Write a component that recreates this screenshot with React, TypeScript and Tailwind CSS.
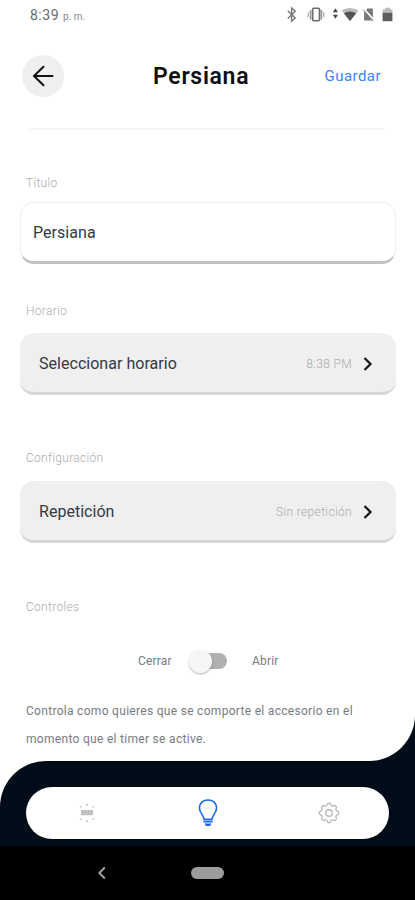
import React from 'react';
import { HiOutlineCog } from 'react-icons/hi';

interface OptionRowProps {
    label: string;
    value: string;
}

const StatusIcons: React.FC = () => (
    <svg className="h-[18px] w-[112px]" viewBox="283 6 112 18" fill="none">
        {/* Bluetooth */}
        <path d="M287.8 10.8 295.2 18l-3.6 3.2V8l3.6 3.2-7.4 7.2" stroke="#777" strokeWidth="1.4" />
        {/* Vibrate */}
        <path d="M308.2 12.3v5M323.8 12.3v5" stroke="#bbb" strokeWidth="1.5" />
        <path d="M310.6 10v9.4M321.4 10v9.4" stroke="#999" strokeWidth="1.7" />
        <rect x="312.7" y="8.2" width="6.8" height="12.6" rx="1" stroke="#6c6c6c" strokeWidth="1.6" />
        {/* Data arrows */}
        <path d="m335.4 8.2 2.5 4h-5zM335.4 18.8l2.5-4h-5z" fill="#444" />
        {/* Wifi */}
        <path d="M341.6 10.6Q350 5.4 358.4 10.6L350 21z" fill="#bbb" />
        <path d="M343.8 13.2Q350 9.8 356.2 13.2L350 21z" fill="#555" />
        {/* No sim */}
        <path d="M367.5 8.6h5.4v11.8h-8.8v-8.2z" fill="#777" />
        <path d="m363.6 9 11 12" stroke="#fff" strokeWidth="2.2" />
        <path d="m363.2 9.8 10.4 11.4" stroke="#777" strokeWidth="1" />
        {/* Battery */}
        <path d="M382.6 9.6h2.4V7.8h5v1.8h2.4V13h-9.8z" fill="#bbb" />
        <path d="M382.6 12.8h9.8v8.4h-9.8z" fill="#5c5c5c" />
    </svg>
);

const SectionLabel: React.FC<{ children: React.ReactNode }> = ({ children }) => (
    <p className="h-4 pl-[26px] text-[12px] leading-4 font-light tracking-[0.3px] text-[#adadad]">{children}</p>
);

const OptionRow: React.FC<OptionRowProps> = ({ label, value }) => (
    <button className="mx-5 flex h-[62px] w-[376px] items-center rounded-[14px] border-b-[3px] border-[#d6d6d6] bg-[#efefef] pt-[2px] pr-[23px] pl-[19px] text-left">
        <span className="flex-1 text-[16px] tracking-[0.03px] text-[#343945]">{label}</span>
        <span className="mr-[11px] text-[12px] font-light tracking-[0.35px] text-[#acacac]">{value}</span>
        <svg className="h-4 w-[10px]" viewBox="0 0 10 16" fill="none" stroke="#161616" strokeWidth="2.2">
            <path d="m1.5 2 6 6-6 6" />
        </svg>
    </button>
);

const BlindIcon: React.FC = () => (
    <svg className="h-5 w-5" viewBox="0 0 20 20" fill="#c0c0c0">
        <rect x="4" y="7" width="12" height="5.2" rx="0.6" />
        <circle cx="10" cy="1.7" r="1" />
        <circle cx="3.7" cy="3.8" r="0.9" />
        <circle cx="16.3" cy="3.8" r="0.9" />
        <circle cx="3.7" cy="16.2" r="0.9" />
        <circle cx="16.3" cy="16.2" r="0.9" />
        <circle cx="10" cy="18.2" r="1" />
    </svg>
);

const BulbIcon: React.FC = () => (
    <svg className="h-[30px] w-6" viewBox="0 0 24 30" fill="none" stroke="#1a68ee" strokeWidth="1.6">
        <path d="M8.1 21.4C7.4 16.6 3.4 15 3.4 9.8 3.4 5.2 7.1 2 12 2s8.6 3.2 8.6 7.8c0 5.2-4 6.800-4.700 11.600z" />
        <path d="M7.400 23.600h9.200" strokeWidth="1.8" />
        <path d="M8.400 25.600h7.200L13.800 28h-3.600z" fill="#1a68ee" stroke="none" />
    </svg>
);

const App: React.FC = () => {
    return (
        <div className="h-[900px] w-[415px] overflow-hidden bg-black font-['Roboto',sans-serif]">
            <div className="bg-[#000c18]">
                <main className="h-[761px] rounded-br-[46px] bg-white">
                    {/* Status bar */}
                    <div className="flex h-[30px] items-center justify-between pr-5 pl-[30px]">
                        <div className="flex items-baseline gap-1 text-[#6a6a6a]">
                            <span className="text-[14px] tracking-[0.5px]">8:39</span>
                            <span className="text-[10px] text-[#888]">p. m.</span>
                        </div>
                        <StatusIcons />
                    </div>

                    <header className="mt-[25px] flex h-[42px] items-center pr-[34px] pl-[22px]">
                        <button
                            className="flex h-[42px] w-[42px] items-center justify-center rounded-full bg-[#efefef]"
                            aria-label="Volver"
                        >
                            <svg className="h-6 w-6" viewBox="0 0 24 24" fill="none" stroke="#111" strokeWidth="2" strokeLinecap="round">
                                <path d="M21.500 12H3M12.500 2.800 3 12l9.500 9.200" />
                            </svg>
                        </button>
                        <h1 className="ml-[89px] flex-1 pt-[3px] text-[23px] font-semibold tracking-[0.7px] text-[#0c0d14]">Persiana</h1>
                        <button className="pt-px text-[15px] tracking-[0.45px] text-[#3c83f7]">Guardar</button>
                    </header>

                    <div className="mx-[30px] mt-[31px] h-[2px] bg-[#f5f5f5]" />

                    <div className="mt-[45px]">
                        <SectionLabel>Título</SectionLabel>
                    </div>
                    <div className="mx-5 mt-[11px] flex h-[62px] w-[376px] items-center rounded-[14px] border border-b-[3px] border-[#efefef] border-b-[#c3c3c3] pt-px pl-3 text-[16px] tracking-[0.05px] text-[#343945]">
                        Persiana
                    </div>

                    <div className="mt-[39px] mb-[14px]">
                        <SectionLabel>Horario</SectionLabel>
                    </div>
                    <OptionRow label="Seleccionar horario" value="8:38 PM" />

                    <div className="mt-[55px] mb-[15px]">
                        <SectionLabel>Configuración</SectionLabel>
                    </div>
                    <OptionRow label="Repetición" value="Sin repetición" />

                    <div className="mt-[56px]">
                        <SectionLabel>Controles</SectionLabel>
                    </div>

                    <div className="mt-[34px] flex h-6 items-center pl-[138px] text-[12px] tracking-[0.2px] text-[#777b84]">
                        <span className="w-[51px]">Cerrar</span>
                        <button className="flex h-6 w-[63px] items-center" role="switch" aria-checked="false" aria-label="Cerrar o abrir">
                            <span className="z-10 h-[23px] w-[23px] rounded-full bg-[#f6f6f6] shadow-[0_1px_2px_rgba(0,0,0,0.3)]" />
                            <span className="-ml-[18px] h-4 w-[33px] rounded-full bg-[#b0b0b0]" />
                        </button>
                        <span>Abrir</span>
                    </div>

                    <p className="mt-[24px] ml-[26px] w-[350px] text-[12px] leading-7 tracking-[0.3px] text-[#777b82]">
                        Controla como quieres que se comporte el accesorio en el
                        <br />
                        momento que el timer se active.
                    </p>
                </main>
            </div>

            <div className="bg-white">
                <div className="h-[85px] rounded-tl-[46px] bg-[#000c18] pt-[26px]">
                    <nav className="mx-[26px] grid h-[52px] grid-cols-3 place-items-center rounded-full bg-white">
                        <BlindIcon />
                        <BulbIcon />
                        <HiOutlineCog className="h-[26px] w-[26px] text-[#b8b8b8] [&_path]:stroke-[1.2px]" />
                    </nav>
                </div>
            </div>

            {/* System navigation */}
            <div className="flex h-[54px] items-center bg-black pl-[97px]">
                <svg className="h-[14px] w-[10px]" viewBox="0 0 10 14" fill="none" stroke="#aaa" strokeWidth="1.8">
                    <path d="M7.800 1.500 2.300 7l5.500 5.500" />
                </svg>
                <span className="ml-[84px] h-3 w-[33px] rounded-full bg-[#9c9c9c]" />
            </div>
        </div>
    );
};

export default App;
